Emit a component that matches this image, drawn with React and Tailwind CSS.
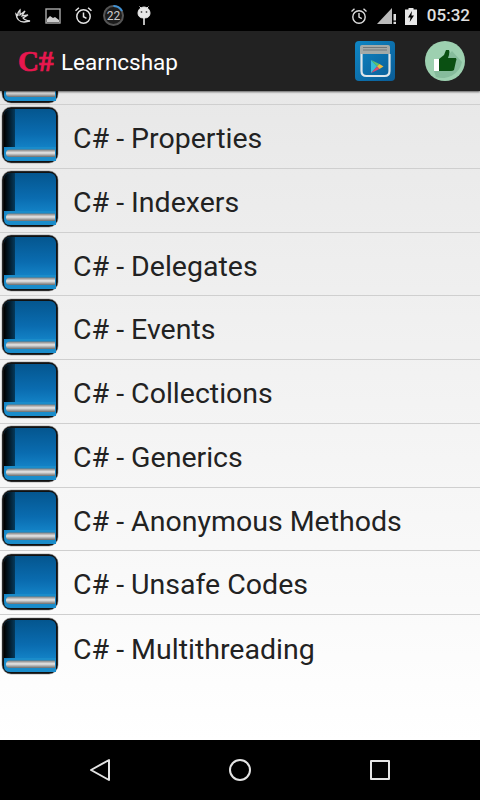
import React from 'react';

const topics = [
    'C# - Properties',
    'C# - Indexers',
    'C# - Delegates',
    'C# - Events',
    'C# - Collections',
    'C# - Generics',
    'C# - Anonymous Methods',
    'C# - Unsafe Codes',
    'C# - Multithreading',
];

const BookIcon = ({ id }) => (
    <svg width="58" height="58" viewBox="0 0 58 58" className="block shrink-0">
        <defs>
            <linearGradient id={`cover-${id}`} x1="0" y1="0" x2="0" y2="1">
                <stop offset="0" stopColor="#04568f" />
                <stop offset="0.5" stopColor="#0a6cb0" />
                <stop offset="1" stopColor="#1a94d8" />
            </linearGradient>
            <linearGradient id={`spine-${id}`} x1="0" y1="0" x2="1" y2="0">
                <stop offset="0" stopColor="#000" />
                <stop offset="1" stopColor="#053a5c" />
            </linearGradient>
            <linearGradient id={`pages-${id}`} x1="0" y1="0" x2="0" y2="1">
                <stop offset="0" stopColor="#7c7c7c" />
                <stop offset="0.45" stopColor="#e8e8e8" />
                <stop offset="1" stopColor="#6c6c6c" />
            </linearGradient>
        </defs>
        <rect x="1" y="1" width="56" height="56" rx="9" fill="#111" stroke="#777" strokeOpacity="0.5" strokeWidth="1" />
        <rect x="3" y="3" width="52" height="50" rx="6" fill={`url(#cover-${id})`} />
        <path d="M3 9a6 6 0 0 1 6-6h5v38H3z" fill={`url(#spine-${id})`} />
        <path d="M3 47q0-6 6-6h46v14H9q-6 0-6-6z" fill="#1a8cca" />
        <path d="M5 47.500q0-4 4-4h45v7.500H9q-4 0-4-3.500z" fill={`url(#pages-${id})`} />
    </svg>
);

const StatusIcons = () => (
    <div className="flex items-center pl-[15px]">
        <svg width="16" height="16" viewBox="0 0 16 16" fill="none" stroke="#ddd" strokeWidth="1.3">
            <path d="M1 6q1 8 8 8l6-1q-6-1-7-3l5-3-6 1 3-5-5 4 0-5q-3 3-2 6z" />
        </svg>
        <svg width="16" height="16" viewBox="0 0 16 16" className="ml-[14px]">
            <rect x="1" y="1" width="14" height="14" fill="none" stroke="#aaa" strokeWidth="1.4" />
            <path d="M2 14v-3l3-3 3 2 2-1 4 3v2z" fill="#ccc" />
        </svg>
        <svg width="19" height="19" viewBox="0 0 19 19" fill="none" stroke="#e4e4e4" strokeWidth="1.5" className="ml-[13px]">
            <circle cx="9.500" cy="10.500" r="6.700" />
            <path d="M9.500 6.500v4.200l3 1.600M1.500 4.800l3.400-3M17.500 4.800l-3.400-3" />
        </svg>
        <div className="relative ml-[10px] flex h-[21px] w-[21px] items-center justify-center rounded-full border-2 border-[#555] bg-[#1c1c1c] text-[12px] text-[#ccc]">
            22
            <svg width="21" height="21" viewBox="0 0 21 21" fill="none" stroke="#3f93d8" strokeWidth="2" className="absolute -top-[2px] -left-[2px]">
                <path d="M10.500 1a9.500 9.500 0 0 1 8.500 5" />
            </svg>
        </div>
        <svg width="14" height="21" viewBox="0 0 14 21" className="ml-[13px]">
            <path d="M1 8a6 6 0 0 1 12 0q0 5-6 5T1 8zM2.500 1.500l2 2M11.500 1.500l-2 2" fill="#e8e8e8" stroke="#e8e8e8" />
            <circle cx="4.500" cy="7" r="0.900" fill="#555" />
            <circle cx="9.500" cy="7" r="0.900" fill="#555" />
            <rect x="6.200" y="12" width="1.600" height="8" fill="#e8e8e8" />
        </svg>
    </div>
);

const App = () => (
    <div className="flex h-[800px] w-[480px] flex-col overflow-hidden bg-white font-['Roboto',sans-serif]">
        {/* status bar */}
        <div className="flex h-[31px] shrink-0 items-center justify-between bg-black">
            <StatusIcons />
            <div className="flex items-center pr-[10px]">
                <svg width="18" height="18" viewBox="0 0 18 18" fill="none" stroke="#ddd" strokeWidth="1.4" className="mr-[9px]">
                    <circle cx="9" cy="10" r="6.200" />
                    <path d="M9 6v4.200l2.800 1.500M1.500 4.500l3-2.700M16.500 4.500l-3-2.700" />
                </svg>
                <svg width="20" height="18" viewBox="0 0 20 18" className="mr-[8px]">
                    <path d="M0 17L15 1v16z" fill="#bbb" />
                    <path d="M16.500 7h2.500v6.500h-2.500zM16.500 14.800H19V17h-2.500z" fill="#ddd" />
                </svg>
                <svg width="12" height="18" viewBox="0 0 12 18" className="mr-[10px]">
                    <path d="M3.500 1h5v1.500H12V18H0V2.500h3.500z" fill="#e8e8e8" />
                    <path d="M7 4L3 10.500h2.500L4.700 15 9 8.500H6.400z" fill="#000" />
                </svg>
                <span className="text-[17px] leading-none font-medium text-[#e0e0e0]">05:32</span>
            </div>
        </div>

        {/* action bar */}
        <div className="z-10 flex h-[60px] shrink-0 items-center justify-between bg-[#222222] shadow-[0_1px_2px_rgba(0,0,0,0.6)]">
            <div className="flex items-center pl-[18px]">
                <span className="mt-[1px] w-[34px] font-['Liberation_Serif',serif] text-[29px] leading-none font-bold whitespace-nowrap text-[#e8174f] [-webkit-text-stroke:0.7px_#e8174f]">C#</span>
                <span className="mt-[2px] ml-[9px] text-[22.500px] leading-none text-white">Learncshap</span>
            </div>
            <div className="flex items-center gap-[30px] pr-[15px]">
                <svg width="40" height="40" viewBox="0 0 40 40">
                    <defs>
                        <linearGradient id="store-bg" x1="0" y1="0" x2="1" y2="1">
                            <stop offset="0" stopColor="#0f86c4" />
                            <stop offset="1" stopColor="#0a5c96" />
                        </linearGradient>
                    </defs>
                    <rect x="0" y="0" width="40" height="40" rx="4" fill="url(#store-bg)" />
                    <path d="M7 4h26q2 0 2 2v7H5V6q0-2 2-2z" fill="#a4aaa8" />
                    <path d="M8 6.500h24M8 9h24" stroke="#72787a" strokeWidth="1" />
                    <path d="M6.500 13v17q0 5 5 5h18q5 0 5-5V13" fill="none" stroke="#dfe6ea" strokeWidth="2.200" />
                    <path d="M16 19v13l6-6.500z" fill="#38bfd8" />
                    <path d="M16 19l6 6.500 2.500-2.500z" fill="#5cc36e" />
                    <path d="M24.500 23l-2.500 2.500 2.500 2.500 4-2.500z" fill="#f2bc3c" />
                    <path d="M16 32l6-6.500 2.500 2.500z" fill="#dc4a70" />
                </svg>
                <svg width="40" height="40" viewBox="0 0 40 40">
                    <circle cx="20" cy="20" r="20" fill="#9dd0b0" />
                    <path d="M9 30l18-20 10 11a20 20 0 0 1-26 15z" fill="#86bc9c" />
                    <path d="M9 18h5v12H9z" fill="#fff" />
                    <path d="M14 18l5-4 2-5h3q1 2 0 5l-1 3h8q1 2 0 3l-2 9q-1 1-3 1H14z" fill="#0a5012" />
                </svg>
            </div>
        </div>

        {/* topic list */}
        <div className="flex-1 overflow-hidden bg-gradient-to-b from-[#e8e8e8] to-white">
            <div className="flex h-[14px] items-end overflow-hidden border-b border-[#cfcfcf] pl-[1px]">
                <div className="shrink-0"><BookIcon id="top" /></div>
            </div>
            {topics.map((topic, i) => (
                <div key={topic} className={`flex h-[63.750px] items-center pl-[1px] ${i < topics.length - 1 ? 'border-b border-[#cfcfcf]' : ''}`}>
                    <div className="mb-[2px] shrink-0"><BookIcon id={i} /></div>
                    <span className="mt-[6px] ml-[14px] text-[28.500px] leading-none whitespace-nowrap text-[#222]">{topic}</span>
                </div>
            ))}
        </div>

        {/* nav bar */}
        <div className="flex h-[60px] shrink-0 items-center bg-black pl-[89px]">
            <svg width="22" height="24" viewBox="0 0 22 24" fill="none" stroke="#e4e4e4" strokeWidth="2" strokeLinejoin="round">
                <path d="M20 2v20L2 12z" />
            </svg>
            <svg width="24" height="24" viewBox="0 0 24 24" fill="none" stroke="#e4e4e4" strokeWidth="2" className="ml-[117px]">
                <circle cx="12" cy="12" r="10" />
            </svg>
            <svg width="20" height="20" viewBox="0 0 20 20" fill="none" stroke="#e4e4e4" strokeWidth="2" strokeLinejoin="round" className="ml-[118px]">
                <rect x="1" y="1" width="18" height="18" />
            </svg>
        </div>
    </div>
);

export default App;
